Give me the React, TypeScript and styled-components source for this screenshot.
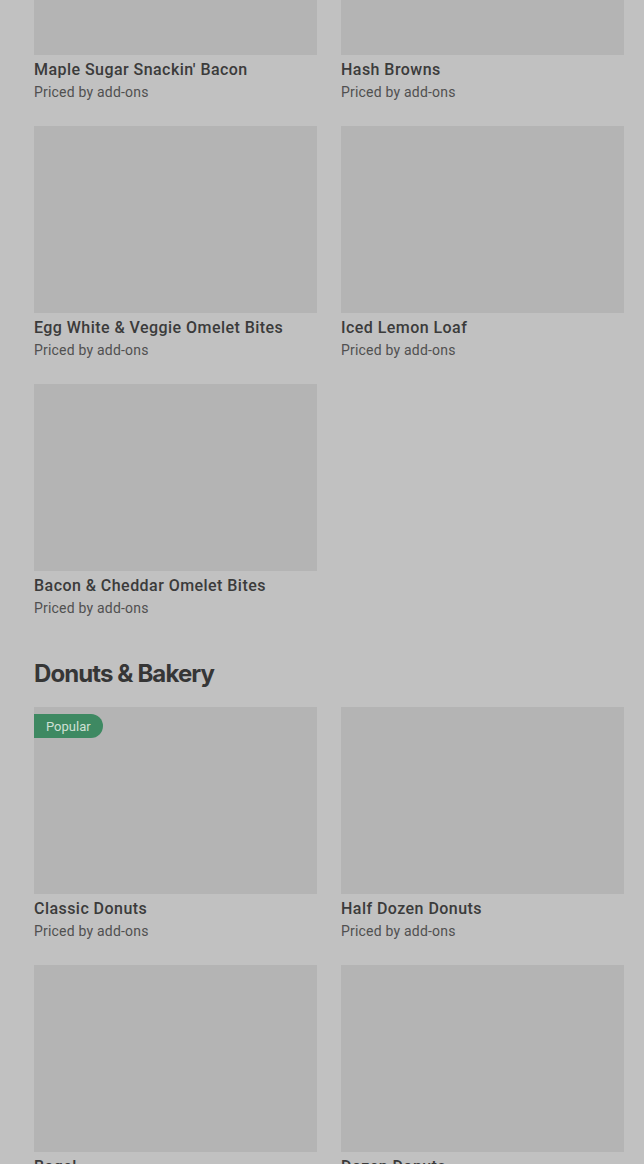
import React from 'react';
import styled, { createGlobalStyle } from 'styled-components';

const GlobalStyle = createGlobalStyle`
  html, body {
    margin: 0;
    padding: 0;
    background: #c1c1c1;
    overflow: hidden;
  }
`;

const Page = styled.div`
  width: 644px;
  height: 1164px;
  overflow: hidden;
  background: #c1c1c1;
  font-family: Roboto, 'Liberation Sans', sans-serif;
`;

const Content = styled.div`
  margin-top: -132px;
  padding: 0 20px 0 34px;
`;

const Section = styled.section`
  display: flex;
  flex-direction: column;
`;

const SectionTitle = styled.h2`
  margin: 40px 0 17px;
  font-family: Inter, 'Noto Sans', sans-serif;
  font-size: 24px;
  line-height: 32px;
  font-weight: 700;
  letter-spacing: -0.9px;
  color: #363636;
`;

const Grid = styled.div`
  display: grid;
  grid-template-columns: 283px 283px;
  column-gap: 24px;
  row-gap: 24px;
`;

const Card = styled.div`
  display: flex;
  flex-direction: column;
  position: relative;
`;

const Thumb = styled.div`
  height: 187px;
  background: #b4b4b4;
`;

const Badge = styled.span`
  position: absolute;
  top: 7px;
  left: 0;
  height: 24px;
  padding: 0 12px;
  display: flex;
  align-items: center;
  background: #3e8962;
  color: #cfe0d5;
  font-size: 13px;
  border-radius: 0 12px 12px 0;
`;

const Name = styled.div`
  margin-top: 3px;
  font-size: 16px;
  line-height: 24px;
  font-weight: 500;
  letter-spacing: 0.45px;
  color: #3b3b3b;
`;

const Price = styled.div`
  font-size: 14px;
  line-height: 20px;
  letter-spacing: 0.2px;
  color: #505050;
`;

interface Item {
  name: string;
  popular?: boolean;
}

const breakfast: Item[] = [
  { name: "Maple Sugar Snackin' Bacon" },
  { name: 'Hash Browns' },
  { name: 'Egg White & Veggie Omelet Bites' },
  { name: 'Iced Lemon Loaf' },
  { name: 'Bacon & Cheddar Omelet Bites' },
];

const bakery: Item[] = [
  { name: 'Classic Donuts', popular: true },
  { name: 'Half Dozen Donuts' },
  { name: 'Bagel' },
  { name: 'Dozen Donuts' },
];

const ItemCard = ({ name, popular }: Item) => (
  <Card>
    <Thumb />
    {popular ? <Badge>Popular</Badge> : null}
    <Name>{name}</Name>
    <Price>Priced by add-ons</Price>
  </Card>
);

const App = () => {
  return (
    <Page>
      <GlobalStyle />
      <Content>
        <Section>
          <Grid>
            {breakfast.map((item) => (
              <ItemCard key={item.name} {...item} />
            ))}
          </Grid>
        </Section>
        <Section>
          <SectionTitle>Donuts &amp; Bakery</SectionTitle>
          <Grid>
            {bakery.map((item) => (
              <ItemCard key={item.name} {...item} />
            ))}
          </Grid>
        </Section>
      </Content>
    </Page>
  );
};

export default App;
